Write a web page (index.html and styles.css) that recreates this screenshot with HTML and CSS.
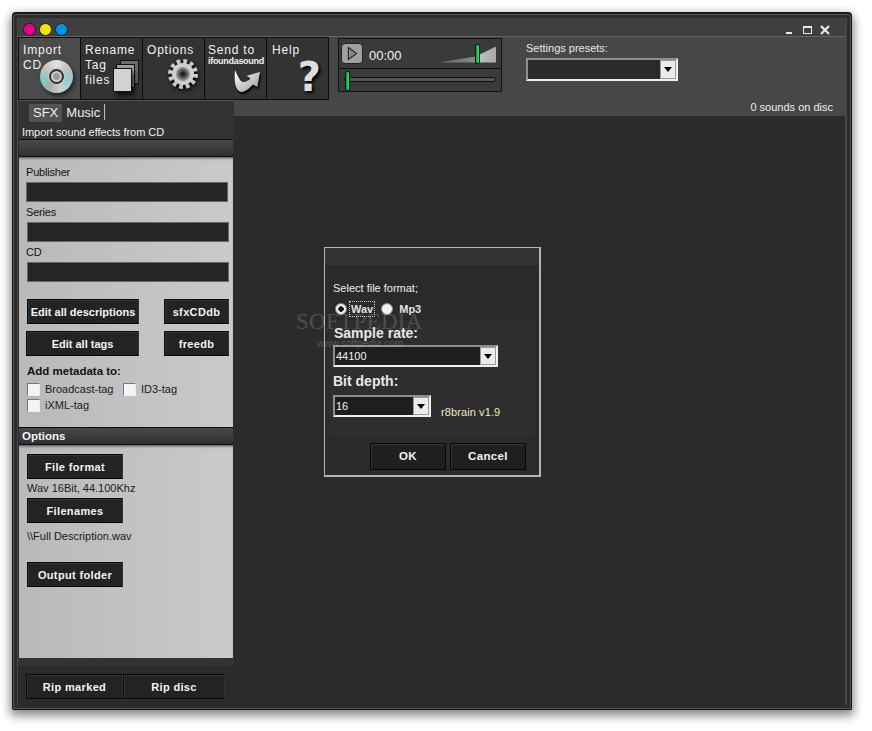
FILE: index.html
```html
<!DOCTYPE html>
<html lang="en">

<head>
    <meta charset="UTF-8">
    <meta name="viewport" content="width=device-width, initial-scale=1.0">
    <title>sfx ripper</title>
    <link rel="stylesheet" href="styles.css">
</head>

<body>
    <div class="window">
        <div class="titlebar">
            <div class="dots">
                <span class="dot dot-pink"></span>
                <span class="dot dot-yellow"></span>
                <span class="dot dot-blue"></span>
            </div>
            <div class="controls">
                <span class="ctl-min"></span>
                <span class="ctl-max"></span>
                <svg class="ctl-close" viewBox="0 0 10 10"><path d="M1 1L9 9M9 1L1 9"/></svg>
            </div>
        </div>

        <div class="top">
            <div class="tools">
                <div class="tool tool-active">
                    Import<br>CD
                    <div class="cd"><div class="cd-ring"></div></div>
                </div>
                <div class="tool">
                    Rename<br>Tag<br>files
                    <div class="pages">
                        <span class="page page-3"></span>
                        <span class="page page-2"></span>
                        <span class="page page-1"></span>
                    </div>
                </div>
                <div class="tool">
                    Options
                    <svg class="gear" viewBox="0 0 32 32">
                        <circle cx="16" cy="16" r="12.5" fill="none" stroke="#c9c9c9" stroke-width="5" stroke-dasharray="3.6 2.94"/>
                        <circle cx="16" cy="16" r="11" fill="#cfcfcf"/>
                        <circle cx="16" cy="16" r="7" fill="#8d8d8d"/>
                        <circle cx="16" cy="16" r="5" fill="#555"/>
                        <circle cx="16" cy="16" r="2.5" fill="#222"/>
                    </svg>
                </div>
                <div class="tool tool-send">
                    Send to
                    <div class="tool-small">ifoundasound</div>
                    <svg class="arrow" viewBox="0 0 30 26">
                        <defs>
                            <linearGradient id="arrowFill" x1="0" y1="0" x2="1" y2="1">
                                <stop offset="0" stop-color="#ffffff"/>
                                <stop offset="1" stop-color="#9a9a9a"/>
                            </linearGradient>
                        </defs>
                        <path fill="url(#arrowFill)" d="M2 2C1 12 2 20 6 23C9 25.5 14 23 20 16.5L24.3 19L27 4L13.7 7.7L17.5 10.5C14 14 10 15 8 13C6 11 4 6 2 2Z"/>
                    </svg>
                </div>
                <div class="tool tool-help">
                    Help
                    <span class="help-mark">?</span>
                </div>
            </div>

            <div class="player">
                <div class="player-row">
                    <div class="play-btn">
                        <svg viewBox="0 0 12 16"><path d="M1.5 1.5L10.5 8L1.5 14.5Z"/></svg>
                    </div>
                    <span class="time">00:00</span>
                    <div class="volume">
                        <span class="volume-ramp"></span>
                        <span class="thumb thumb-vol"></span>
                    </div>
                </div>
                <div class="player-seek">
                    <div class="seek-track"></div>
                    <span class="thumb thumb-seek"></span>
                </div>
            </div>

            <div class="presets">
                <div class="presets-label">Settings presets:</div>
                <div class="combo combo-presets">
                    <span class="combo-value"></span>
                    <span class="combo-btn"></span>
                </div>
            </div>
        </div>

        <div class="lower">
            <div class="sidebar">
                <div class="tabs">
                    <span class="tab tab-on">SFX</span>
                    <span class="tab tab-music">Music</span>
                </div>
                <div class="side-title">Import sound effects from CD</div>
                <div class="bar"></div>

                <div class="panel panel-cd">
                    <div class="field-label">Publisher</div>
                    <div class="field field-first"></div>
                    <div class="field-label">Series</div>
                    <div class="field"></div>
                    <div class="field-label">CD</div>
                    <div class="field"></div>

                    <div class="btn-row btn-row-first">
                        <button class="btn btn-desc">Edit all descriptions</button>
                        <button class="btn btn-db">sfxCDdb</button>
                    </div>
                    <div class="btn-row btn-row-second">
                        <button class="btn btn-tags">Edit all tags</button>
                        <button class="btn btn-db">freedb</button>
                    </div>

                    <div class="meta-title">Add metadata to:</div>
                    <div class="checks">
                        <label class="check check-broadcast"><span class="box"></span>Broadcast-tag</label>
                        <label class="check"><span class="box"></span>ID3-tag</label>
                    </div>
                    <div class="checks">
                        <label class="check"><span class="box"></span>iXML-tag</label>
                    </div>
                </div>

                <div class="bar bar-options">Options</div>

                <div class="panel panel-options">
                    <button class="btn btn-opt">File format</button>
                    <div class="opt-note">Wav 16Bit, 44.100Khz</div>
                    <button class="btn btn-opt">Filenames</button>
                    <div class="opt-note opt-note-path">\\Full Description.wav</div>
                    <button class="btn btn-opt btn-output">Output folder</button>
                </div>

                <div class="rip-row">
                    <button class="btn btn-rip">Rip marked</button>
                    <button class="btn btn-rip btn-rip-disc">Rip disc</button>
                </div>
            </div>

            <div class="right">
                <div class="status">0 sounds on disc</div>
                <div class="main"></div>
            </div>
        </div>

        <div class="dialog">
            <div class="dialog-head"></div>
            <div class="dialog-format">
                <div class="dialog-label">Select file format;</div>
                <div class="radios">
                    <span class="radio radio-on"></span>
                    <span class="radio-text radio-focus">Wav</span>
                    <span class="radio"></span>
                    <span class="radio-text">Mp3</span>
                </div>
            </div>
            <div class="dialog-inner">
                <div class="dialog-heading dialog-heading-rate">Sample rate:</div>
                <div class="combo combo-rate">
                    <span class="combo-value">44100</span>
                    <span class="combo-btn"></span>
                </div>
                <div class="dialog-heading dialog-heading-depth">Bit depth:</div>
                <div class="depth-row">
                    <div class="combo combo-depth">
                        <span class="combo-value">16</span>
                        <span class="combo-btn"></span>
                    </div>
                    <span class="version">r8brain v1.9</span>
                </div>
            </div>
            <div class="dialog-actions">
                <button class="btn btn-dialog">OK</button>
                <button class="btn btn-dialog">Cancel</button>
            </div>
        </div>

        <div class="watermark">SOFTPEDIA</div>
        <div class="watermark-url">www.softpedia.com</div>
    </div>
</body>

</html>
```

FILE: styles.css
```css
* {
    box-sizing: border-box;
}

:root {
    --panel: #c6c6c6;
    --head: #474747;
    --dark: #2b2b2b;
    --text: #f2f2f2;
}

html,
body {
    margin: 0;
    padding: 0;
    background: #ffffff;
    font-family: "Liberation Sans", Arial, sans-serif;
    font-size: 11px;
    overflow: hidden;
}

body {
    height: 731px;
}

/* window frame */
.window {
    position: relative;
    margin: 12px 0 0 12px;
    width: 840px;
    height: 698px;
    padding: 4px 6px 4px 5px;
    display: flex;
    flex-direction: column;
    background: var(--head);
    border: 1px solid #111;
    border-top: 2px solid #1a1a1a;
    border-radius: 4px 4px 2px 2px;
    box-shadow: 0 4px 10px 2px rgba(0, 0, 0, 0.45), inset 0 0 0 1px #555, inset 0 0 0 4px #2c2c2c;
}

.titlebar {
    height: 19px;
    flex: none;
    display: flex;
    justify-content: space-between;
    align-items: center;
    border-bottom: 1px solid #666;
    background: #3f3f3f;
}

.dots {
    display: flex;
    gap: 3px;
    margin: 4px 0 0 5px;
}

.dot {
    width: 13px;
    height: 13px;
    border-radius: 50%;
    border: 1px solid #222;
}

.dot-pink {
    background: #e6008c;
}

.dot-yellow {
    background: #f5e500;
}

.dot-blue {
    background: #0095e8;
}

.controls {
    display: flex;
    align-items: center;
    margin: 5px 15px 0 0;
}

.ctl-min {
    width: 6px;
    height: 2px;
    margin-top: 7px;
    background: #e8e8e8;
}

.ctl-max {
    width: 9px;
    height: 8px;
    margin-left: 11px;
    border: 1px solid #e8e8e8;
    border-top-width: 2px;
}

.ctl-close {
    width: 10px;
    height: 10px;
    margin-left: 8px;
    stroke: #e8e8e8;
    stroke-width: 2.2;
    fill: none;
}

/* top strip */
.top {
    height: 63px;
    flex: none;
    display: flex;
    align-items: flex-start;
}

.tools {
    display: flex;
    width: 311px;
    height: 63px;
    border: 1px solid #0c0c0c;
    background: #0c0c0c;
    gap: 1px;
}

.tool {
    position: relative;
    flex: 0 0 61px;
    padding: 5px 0 0 4px;
    background: #333;
    color: var(--text);
    font-size: 12px;
    line-height: 15px;
    letter-spacing: 0.8px;
    white-space: nowrap;
}

.tool-active {
    background: #4b4b4b;
}

.tool-send {
    padding-left: 3px;
}

.tool-help {
    padding-left: 5px;
}

.tool-small {
    font-size: 9px;
    line-height: 7px;
    letter-spacing: -0.3px;
    font-weight: bold;
}

.cd {
    position: absolute;
    right: 7px;
    bottom: 6px;
    width: 33px;
    height: 33px;
    border-radius: 50%;
    background: conic-gradient(#e2e2e2 0deg, #bdbdbd 60deg, #8fd0cf 110deg, #cfcfcf 160deg, #a8a8a8 220deg, #7fcac8 250deg, #c0c0c0 300deg, #e2e2e2 360deg);
    box-shadow: 2px 3px 4px rgba(0, 0, 0, 0.55);
    display: flex;
    align-items: center;
    justify-content: center;
}

.cd-ring {
    width: 15px;
    height: 15px;
    border-radius: 50%;
    background: #9a9a9a;
    border: 2px solid #333;
    box-shadow: inset 0 0 0 2px #cfcfcf, 0 0 0 1px #ccc;
}

.pages {
    position: absolute;
    right: 3px;
    bottom: 7px;
    width: 26px;
    height: 32px;
}

.page {
    position: absolute;
    width: 19px;
    height: 24px;
    border: 1px solid #111;
}

.page-1 {
    left: 0;
    bottom: 0;
    background: #d2d2d2;
    box-shadow: 3px 4px 5px rgba(0, 0, 0, 0.7);
}

.page-2 {
    left: 3px;
    top: 4px;
    background: #9d9d9d;
}

.page-3 {
    left: 7px;
    top: 0;
    background: #6c6c6c;
}

.gear {
    position: absolute;
    right: 5px;
    bottom: 9px;
    width: 32px;
    height: 32px;
    filter: drop-shadow(1px 2px 2px #000);
}

.arrow {
    position: absolute;
    right: 3px;
    bottom: 5px;
    width: 30px;
    height: 26px;
    filter: drop-shadow(1px 2px 1px #000);
}

.help-mark {
    position: absolute;
    right: 7px;
    bottom: 2px;
    font-family: "DejaVu Sans", sans-serif;
    font-size: 40px;
    line-height: 40px;
    font-weight: bold;
    letter-spacing: 0;
    color: #dedede;
    text-shadow: 2px 2px 3px #000;
}

/* player */
.player {
    width: 164px;
    height: 54px;
    margin: 1px 0 0 9px;
    border: 1px solid #111;
    background: #3a3a3a;
}

.player-row {
    height: 30px;
    display: flex;
    align-items: center;
    padding-left: 2px;
    border-bottom: 1px solid #111;
}

.play-btn {
    width: 22px;
    height: 21px;
    border: 1px solid #222;
    border-radius: 4px;
    background: #a0a0a0;
    display: flex;
    align-items: center;
    justify-content: center;
}

.play-btn svg {
    width: 11px;
    height: 15px;
    fill: #8c8c8c;
    stroke: #222;
    stroke-width: 1.2;
}

.time {
    margin: 4px 0 0 6px;
    color: #f2f2f2;
    font-size: 13px;
}

.volume {
    position: relative;
    width: 58px;
    height: 20px;
    margin-left: auto;
    margin-right: 5px;
}

.volume-ramp {
    position: absolute;
    right: 0;
    bottom: 1px;
    width: 58px;
    height: 16px;
    background: linear-gradient(90deg, #666 0, #888 65%, #c0c0c0 70%, #a8a8a8 100%);
    clip-path: polygon(0 100%, 65% 63%, 100% 0, 100% 100%);
}

.thumb {
    position: absolute;
    width: 5px;
    background: linear-gradient(90deg, #0d8f3a, #1dff5a);
    border: 1px solid #111;
    border-radius: 2px;
}

.thumb-vol {
    left: 37px;
    top: 0;
    height: 20px;
}

.player-seek {
    position: relative;
    height: 23px;
}

.seek-track {
    position: absolute;
    left: 5px;
    right: 5px;
    top: 8px;
    height: 5px;
    border: 1px solid #111;
    border-radius: 3px;
    background: #555;
}

.thumb-seek {
    left: 6px;
    top: 2px;
    height: 20px;
}

/* presets */
.presets {
    margin: 5px 0 0 24px;
}

.presets-label {
    color: #e8e8e8;
    font-size: 11px;
    line-height: 13px;
}

.combo {
    display: flex;
    align-items: center;
    background: #222;
    border: 2px solid #8f8f8f;
    border-right-color: #f0f0f0;
    border-bottom-color: #f0f0f0;
}

.combo-presets {
    width: 152px;
    height: 23px;
    margin-top: 3px;
    background: #2b2b2b;
}

.combo-value {
    flex: 1;
    padding: 0 0 1px 1px;
    color: #f2f2f2;
    font-size: 11px;
}

.combo-btn {
    position: relative;
    width: 16px;
    align-self: stretch;
    background: #ececec;
    border: 1px solid #999;
}

.combo-btn::after {
    content: "";
    position: absolute;
    left: 3px;
    top: 6px;
    border-left: 4px solid transparent;
    border-right: 4px solid transparent;
    border-top: 5px solid #000;
}

/* lower area */
.lower {
    flex: 1;
    min-height: 0;
    display: flex;
}

.sidebar {
    width: 216px;
    flex: none;
    display: flex;
    flex-direction: column;
    background: var(--dark);
    color: #111;
}

.tabs {
    height: 24px;
    display: flex;
    align-items: flex-start;
    padding: 3px 0 0 11px;
    background: #333;
    border-top: 1px solid #555;
}

.tab {
    padding: 0 4px;
    height: 18px;
    font-size: 13px;
    line-height: 18px;
    color: #eee;
}

.tab-on {
    background: #525252;
}

.tab-music {
    border-right: 1px solid #bbb;
    height: 16px;
    line-height: 17px;
}

.side-title {
    height: 15px;
    padding-left: 4px;
    background: #333;
    color: #f2f2f2;
    font-size: 11px;
    letter-spacing: -0.05px;
    line-height: 16px;
}

.bar {
    height: 18px;
    flex: none;
    margin: 0 1px;
    background: linear-gradient(#484848, #303030);
    border-top: 1px solid #0d0d0d;
    border-bottom: 1px solid #0d0d0d;
    padding-left: 3px;
    color: #f2f2f2;
    font-weight: bold;
    font-size: 11.5px;
    line-height: 16px;
}

.panel {
    background: linear-gradient(90deg, #b9b9b9, #cacaca);
    flex: none;
    margin: 0 1px;
    padding-left: 7px;
}

.panel-cd {
    height: 270px;
    padding-top: 9px;
    box-shadow: inset 0 3px 3px -2px #444;
}

.field-label {
    height: 16px;
    line-height: 13px;
    color: #111;
    letter-spacing: -0.2px;
}

.field {
    width: 202px;
    height: 20px;
    margin-left: 1px;
    margin-bottom: 4px;
    background: #252525;
    border: 1px solid #666;
}

.field-first {
    margin-left: 0;
}

.btn {
    display: block;
    padding: 0;
    height: 25px;
    white-space: nowrap;
    font-family: "Liberation Sans", Arial, sans-serif;
    font-size: 11px;
    font-weight: bold;
    letter-spacing: 0.35px;
    color: #f4f4f4;
    background: #232323;
    border: 1px solid #0a0a0a;
    border-right-color: #333;
    border-bottom-color: #050505;
    box-shadow: inset 1px 1px 0 #333;
}

.btn-row {
    display: flex;
    justify-content: space-between;
    width: 202px;
    margin-left: 1px;
}

.btn-row-first {
    margin-top: 17px;
}

.btn-row-second {
    margin-top: 7px;
}

.btn-desc {
    width: 112px;
    letter-spacing: 0;
}

.btn-tags {
    width: 113px;
    margin-left: -1px;
    letter-spacing: 0;
}

.btn-db {
    width: 65px;
}

.meta-title {
    margin: 9px 0 0 1px;
    height: 13px;
    font-weight: bold;
    font-size: 11.5px;
    line-height: 13px;
}

.checks {
    display: flex;
    height: 16px;
    margin: 3px 0 0 1px;
}

.checks + .checks {
    margin-top: 0;
}

.check {
    display: flex;
    align-items: center;
    color: #1a1a1a;
}

.check-broadcast {
    width: 96px;
}

.box {
    width: 13px;
    height: 13px;
    margin-right: 5px;
    background: #f4f4f4;
    border: 1px solid #777;
    border-right-color: #eee;
    border-bottom-color: #eee;
}

.panel-options {
    height: 213px;
    padding-top: 9px;
    box-shadow: inset 0 3px 3px -2px #444;
}

.btn-opt {
    width: 96px;
    margin-left: 1px;
}

.opt-note {
    height: 19px;
    margin-left: 1px;
    line-height: 18px;
    color: #1a1a1a;
}

.opt-note-path {
    height: 39px;
    padding-top: 4px;
}

.rip-row {
    flex: 1;
    display: flex;
    align-items: flex-start;
    padding: 16px 0 0 8px;
    background: linear-gradient(#333 8px, var(--dark) 8px);
}

.btn-rip {
    width: 97px;
}

.btn-rip-disc {
    width: 102px;
}

/* right side */
.right {
    flex: 1;
    display: flex;
    flex-direction: column;
}

.status {
    height: 16px;
    padding-right: 12px;
    text-align: right;
    color: #eee;
    line-height: 14px;
}

.main {
    flex: 1;
    background: var(--dark);
}

/* file format dialog */
.dialog {
    position: absolute;
    left: 311px;
    top: 233px;
    width: 217px;
    height: 230px;
    z-index: 2;
    display: flex;
    flex-direction: column;
    background: #2a2a2a;
    border: 2px solid #b4b4b4;
    border-top-width: 1px;
    border-left-width: 1px;
    color: #eee;
}

.dialog-head {
    height: 17px;
    flex: none;
    background: #333;
}

.dialog-format {
    height: 55px;
    flex: none;
    padding: 17px 0 0 8px;
}

.dialog-label {
    height: 15px;
    line-height: 13px;
}

.radios {
    display: flex;
    align-items: center;
    height: 16px;
    margin-top: 4px;
    padding-left: 2px;
}

.radio {
    width: 12px;
    height: 12px;
    border-radius: 50%;
    background: #f2f2f2;
    border: 1px solid #888;
}

.radio-on {
    background: radial-gradient(circle, #111 2.5px, #f2f2f2 3px);
}

.radio-text {
    margin: 0 8px 0 6px;
    font-weight: bold;
    color: #e2e2e2;
}

.radio-focus {
    outline: 1px dotted #ccc;
    outline-offset: 1px;
    margin: 0 8px 0 4px;
}

.dialog-inner {
    height: 117px;
    flex: none;
    margin: 0 4px;
    padding: 6px 0 0 4px;
    background: #2e2e2e;
}

.dialog-heading {
    font-size: 14px;
    font-weight: bold;
    line-height: 14px;
    color: #e8e8e8;
}

.dialog-heading-rate {
    margin-left: 1px;
}

.dialog-heading-depth {
    margin-top: 7px;
}

.combo-rate {
    width: 165px;
    height: 22px;
    margin-top: 5px;
    background: #1e1e1e;
}

.depth-row {
    display: flex;
    align-items: flex-end;
    margin-top: 7px;
}

.combo-depth {
    width: 98px;
    height: 22px;
    background: #1e1e1e;
}

.version {
    margin: 0 0 -2px 10px;
    color: #f0e8c0;
    line-height: 13px;
    letter-spacing: 0.1px;
}

.dialog-actions {
    display: flex;
    justify-content: flex-end;
    gap: 4px;
    padding: 6px 13px 0 0;
}

.btn-dialog {
    width: 76px;
    height: 27px;
    padding-bottom: 2px;
    font-size: 11.5px;
    border-color: #050505;
    background: #1f1f1f;
}

.watermark {
    position: absolute;
    left: 283px;
    top: 295px;
    z-index: 3;
    font-family: "Liberation Serif", serif;
    font-size: 23px;
    letter-spacing: 0.3px;
    color: rgba(255, 255, 255, 0.18);
    pointer-events: none;
}

.watermark-url {
    position: absolute;
    left: 304px;
    top: 324px;
    z-index: 3;
    font-size: 10px;
    color: rgba(255, 255, 255, 0.2);
}
```
